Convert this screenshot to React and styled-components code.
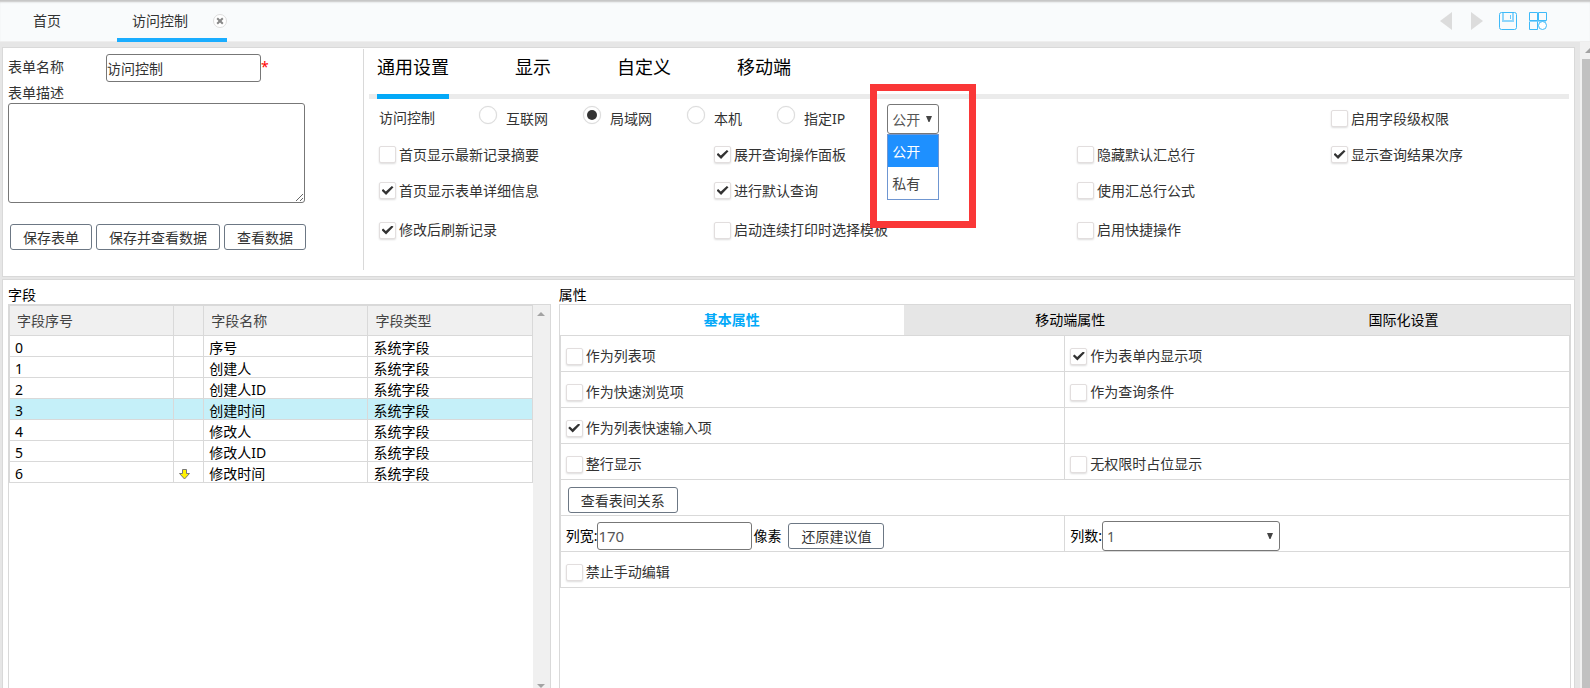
import React, { useState } from 'react';
import styled, { createGlobalStyle } from 'styled-components';

const fields = [
  { id: 0, name: '序号' },
  { id: 1, name: '创建人' },
  { id: 2, name: '创建人ID' },
  { id: 3, name: '创建时间' },
  { id: 4, name: '修改人' },
  { id: 5, name: '修改人ID' },
  { id: 6, name: '修改时间', moved: true }
];

const settingTabs = ['通用设置', '显示', '自定义', '移动端'];
const propertyTabs = ['基本属性', '移动端属性', '国际化设置'];
const accessModes = ['互联网', '局域网', '本机', '指定IP'];
const visibilities = ['公开', '私有'];

const Check = ({ label, on }) => (
  <CheckLabel>
    <input type="checkbox" defaultChecked={on} />
    {label}
  </CheckLabel>
);

const Caret = () => (
  <svg width="6" height="6" viewBox="0 0 6 6" aria-hidden="true">
    <path d="M0 0h6L3.5 6h-1z" fill="#444" />
  </svg>
);

const TopBar = () => (
  <Header>
    <PageTab>
      <button>首页</button>
    </PageTab>
    <PageTab $active>
      <button>访问控制</button>
      <CloseBtn aria-label="关闭">
        <svg width="14" height="14" viewBox="0 0 14 14">
          <circle cx="7" cy="7" r="6.5" fill="#fff" stroke="#ddd" />
          <path d="M4.2 4.2l5.6 5.6M9.8 4.2l-5.6 5.6" stroke="#888" strokeWidth="2" />
        </svg>
      </CloseBtn>
    </PageTab>
    <Tools>
      <IconBtn aria-label="后退">
        <svg width="18" height="18" viewBox="0 0 18 18">
          <path d="M13 0v18L1 9z" fill="#dcdcdc" />
        </svg>
      </IconBtn>
      <IconBtn aria-label="前进">
        <svg width="18" height="18" viewBox="0 0 18 18">
          <path d="M2 0v18l12-9z" fill="#dcdcdc" />
        </svg>
      </IconBtn>
      <IconBtn aria-label="保存">
        <svg width="18" height="18" viewBox="0 0 18 18" fill="none" stroke="#3fbaf9">
          <path d="M4 1v8h10V1" stroke="#8fd6fc" strokeWidth="2" />
          <path d="M11.5 3v4" stroke="#6ac8fa" />
          <rect x="0.5" y="0.5" width="17" height="17" rx="2" />
        </svg>
      </IconBtn>
      <IconBtn aria-label="应用">
        <svg width="18" height="18" viewBox="0 0 18 18" fill="none" stroke="#3fbaf9">
          <path d="M9 1v9M1 9h16" stroke="#8fd6fc" strokeWidth="2" />
          <path d="M0.5 0.5h8v8h-8zM9.5 0.5h8v8h-8zM8.5 9.5v8h-8v-8" />
          <circle cx="13.5" cy="13.5" r="4" fill="#fff" />
        </svg>
      </IconBtn>
    </Tools>
  </Header>
);

const FormInfo = () => (
  <Info>
    <NameRow>
      <label htmlFor="form-name">表单名称</label>
      <TextInput id="form-name" defaultValue="访问控制" />
      <span>*</span>
    </NameRow>
    <DescLabel htmlFor="form-desc">表单描述</DescLabel>
    <Description id="form-desc" />
    <Actions>
      <Btn>保存表单</Btn>
      <Btn>保存并查看数据</Btn>
      <Btn>查看数据</Btn>
    </Actions>
  </Info>
);

const VisibilityPicker = () => {
  const [value, setValue] = useState('公开');

  return (
    <Picker>
      <SelectBox>
        <select aria-label="公开范围" value={value} onChange={e => setValue(e.target.value)}>
          {visibilities.map(v => (
            <option key={v}>{v}</option>
          ))}
        </select>
        <Caret />
      </SelectBox>
      <Menu role="listbox">
        {visibilities.map(v => (
          <MenuItem
            key={v}
            role="option"
            aria-selected={v === value}
            $active={v === value}
            onClick={() => setValue(v)}
          >
            {v}
          </MenuItem>
        ))}
      </Menu>
      <Highlight />
    </Picker>
  );
};

const Settings = () => (
  <SettingsWrap>
    <SettingTabs>
      {settingTabs.map((tab, index) => (
        <SettingTab key={tab} $active={index === 0}>
          {tab}
        </SettingTab>
      ))}
    </SettingTabs>
    <Options>
      <Access>
        <span>访问控制</span>
        {accessModes.map(mode => (
          <RadioLabel key={mode}>
            <input type="radio" name="access" defaultChecked={mode === '局域网'} />
            <span>{mode}</span>
          </RadioLabel>
        ))}
        <VisibilityPicker />
      </Access>
      <Check label="启用字段级权限" />
      <Check label="首页显示最新记录摘要" />
      <Check label="展开查询操作面板" on />
      <Check label="隐藏默认汇总行" />
      <Check label="显示查询结果次序" on />
      <Check label="首页显示表单详细信息" on />
      <Check label="进行默认查询" on />
      <Check label="使用汇总行公式" />
      <i />
      <Check label="修改后刷新记录" on />
      <Check label="启动连续打印时选择模板" />
      <Check label="启用快捷操作" />
    </Options>
  </SettingsWrap>
);

const FieldList = () => {
  const [selected, setSelected] = useState(3);

  return (
    <FieldSection>
      <Title>字段</Title>
      <FieldBox>
        <FieldTable>
          <colgroup>
            <col />
            <col className="mark" />
            <col />
            <col />
          </colgroup>
          <thead>
            <tr>
              <th>字段序号</th>
              <th />
              <th>字段名称</th>
              <th>字段类型</th>
            </tr>
          </thead>
          <tbody>
            {fields.map(field => (
              <FieldRow
                key={field.id}
                $selected={field.id === selected}
                onClick={() => setSelected(field.id)}
              >
                <td>{field.id}</td>
                <td>
                  {field.moved ? (
                    <svg width="11" height="11" viewBox="0 0 11 11">
                      <path
                        d="M3.5 0.5h4v4h3l-5 5.5-5-5.5h3z"
                        fill="#fff200"
                        stroke="#777"
                      />
                    </svg>
                  ) : null}
                </td>
                <td>{field.name}</td>
                <td>系统字段</td>
              </FieldRow>
            ))}
          </tbody>
        </FieldTable>
        <InnerScroll>
          <svg width="8" height="4" viewBox="0 0 8 4">
            <path d="M0 4l4-4 4 4z" fill="#a3a3a3" />
          </svg>
          <svg width="8" height="4" viewBox="0 0 8 4">
            <path d="M0 0l4 4 4-4z" fill="#a3a3a3" />
          </svg>
        </InnerScroll>
      </FieldBox>
    </FieldSection>
  );
};

const Properties = () => (
  <PropertySection>
    <Title>属性</Title>
    <PropertyBox>
      <PropertyTabs>
        {propertyTabs.map((tab, index) => (
          <PropertyTab key={tab} $active={index === 0}>
            {tab}
          </PropertyTab>
        ))}
      </PropertyTabs>
      <PropertyTable>
        <tbody>
          <tr>
            <td><Check label="作为列表项" /></td>
            <td><Check label="作为表单内显示项" on /></td>
          </tr>
          <tr>
            <td><Check label="作为快速浏览项" /></td>
            <td><Check label="作为查询条件" /></td>
          </tr>
          <tr>
            <td><Check label="作为列表快速输入项" on /></td>
            <td />
          </tr>
          <tr>
            <td><Check label="整行显示" /></td>
            <td><Check label="无权限时占位显示" /></td>
          </tr>
          <tr>
            <td colSpan="2">
              <Inline $indent>
                <Btn>查看表间关系</Btn>
              </Inline>
            </td>
          </tr>
          <tr>
            <td>
              <Inline>
                <label htmlFor="col-width">列宽:</label>
                <TextInput id="col-width" defaultValue="170" $number />
                <Unit>像素</Unit>
                <Btn>还原建议值</Btn>
              </Inline>
            </td>
            <td>
              <Inline>
                <label htmlFor="col-count">列数:</label>
                <SelectBox $wide>
                  <select id="col-count">
                    <option>1</option>
                    <option>2</option>
                  </select>
                  <Caret />
                </SelectBox>
              </Inline>
            </td>
          </tr>
          <tr>
            <td colSpan="2"><Check label="禁止手动编辑" /></td>
          </tr>
        </tbody>
      </PropertyTable>
    </PropertyBox>
  </PropertySection>
);

const App = () => (
  <Page>
    <GlobalStyle />
    <TopBar />
    <Body>
      <Main>
        <Panel>
          <FormInfo />
          <Settings />
        </Panel>
        <Panel $grow>
          <FieldList />
          <Properties />
        </Panel>
      </Main>
      <PageScroll>
        <svg width="10" height="5" viewBox="0 0 10 5">
          <path d="M0 5l5-5 5 5z" fill="#a3a3a3" />
        </svg>
        <div />
      </PageScroll>
    </Body>
  </Page>
);

export default App;

const GlobalStyle = createGlobalStyle`
  * {
    box-sizing: border-box;
  }

  body {
    margin: 0;
    background: #e6e6e6;
    color: #333;
    font-family: 'Noto Sans', 'Noto Sans CJK SC', sans-serif;
    font-size: 14px;
    line-height: 20px;
    overflow: hidden;
  }

  button, input, select, textarea {
    margin: 0;
    color: inherit;
    font: inherit;
  }

  button {
    padding: 0;
    border: none;
    background: none;
    cursor: pointer;
  }
`;

const Page = styled.div`
  display: flex;
  flex-direction: column;
  height: 100vh;
`;

const Header = styled.header`
  display: flex;
  flex: none;
  height: 42px;
  padding-left: 19px;
  background: #f9fbfc;
  border-bottom: 1px solid #eee;
  box-shadow: inset 0 3px 2px -1px #c4c4c4;
`;

const PageTab = styled.div`
  display: flex;
  justify-content: space-between;
  align-items: center;
  height: 42px;
  padding: ${props => (props.$active ? '3px 0 0 15px' : '3px 56px 0 14px')};
  border-bottom: 4px solid ${props => (props.$active ? '#1aadff' : 'transparent')};
  width: ${props => (props.$active ? '110px' : 'auto')};
`;

const CloseBtn = styled.button`
  display: flex;
`;

const Tools = styled.div`
  display: flex;
  align-items: center;
  gap: 12px;
  margin-left: auto;
  padding-right: 43px;
`;

const IconBtn = styled.button`
  display: flex;
`;

const Body = styled.div`
  display: flex;
  flex: 1;
  min-height: 0;
`;

const Main = styled.main`
  display: flex;
  flex-direction: column;
  flex: 1;
  gap: 2px;
  min-width: 0;
  padding: 5px 5px 0 2px;
`;

const Panel = styled.section`
  display: flex;
  flex: ${props => (props.$grow ? '1' : 'none')};
  min-height: 0;
  background: #fff;
  border: 1px solid #d9d9d9;
  border-bottom-width: ${props => (props.$grow ? '0' : '1px')};
`;

const PageScroll = styled.div`
  display: flex;
  flex-direction: column;
  align-items: flex-end;
  flex: none;
  width: 10px;
  overflow: hidden;
  background: #f1f1f1;

  svg {
    flex: none;
    margin: 6px -5px 6px 0;
  }

  div {
    flex: 1;
    width: 8px;
    background: #c1c1c1;
  }
`;

const Info = styled.form`
  flex: none;
  width: 361px;
  margin: 1px 0 6px;
  padding: 5px 5px 20px;
  border-right: 1px solid #d9d9d9;
`;

const NameRow = styled.div`
  display: flex;
  align-items: center;

  label {
    width: 98px;
    padding-bottom: 2px;
  }

  span {
    padding-bottom: 2px;
    color: #f00;
  }
`;

const TextInput = styled.input`
  width: 155px;
  height: 28px;
  padding: 0;
  border: 1px solid #777;
  border-radius: 3px;
  color: ${props => (props.$number ? '#555' : '#333')};
  font-size: ${props => (props.$number ? '15px' : '14px')};
`;

const DescLabel = styled.label`
  display: block;
  padding-top: 1px;
`;

const Description = styled.textarea`
  display: block;
  width: 297px;
  height: 100px;
  border: 1px solid #777;
  border-radius: 3px;
`;

const Actions = styled.div`
  display: flex;
  gap: 4px;
  padding: 21px 2px 0;
`;

const Btn = styled.button.attrs({ type: 'button' })`
  height: 26px;
  padding: 2px 12px 0;
  background: #fff;
  border: 1px solid #6c7784;
  border-radius: 3px;
  color: #333;
  line-height: 20px;
`;

const SettingsWrap = styled.div`
  flex: 1;
  min-width: 0;
  padding: 0 5px;
`;

const SettingTabs = styled.div`
  display: flex;
  gap: 66px;
  height: 51px;
  padding-left: 8px;
  border-bottom: 5px solid #ebebeb;
`;

const SettingTab = styled.button`
  height: 51px;
  padding-bottom: 9px;
  border-bottom: 5px solid ${props => (props.$active ? '#03a9f8' : 'transparent')};
  color: #000;
  font-size: 18px;
`;

const Options = styled.div`
  display: grid;
  grid-template-columns: 335fr 363fr 254fr 238fr;
  grid-template-rows: 39px 33px 39px 40px;
  align-items: center;
  padding-left: 10px;
`;

const CheckLabel = styled.label`
  display: flex;
  align-items: center;
  gap: 3px;
  white-space: nowrap;

  input {
    display: grid;
    place-content: center;
    width: 17px;
    height: 17px;
    appearance: none;
    background: #fff;
    border: 1px solid #e2dede;
    border-radius: 2px;
    box-shadow: 0 1px 2px #ddd;
  }

  input:checked::before {
    content: '';
    width: 12px;
    height: 9px;
    background: #333;
    clip-path: polygon(0 50%, 14% 34%, 36% 60%, 86% 0, 100% 14%, 38% 100%);
  }
`;

const Access = styled.div`
  display: flex;
  align-items: center;
  grid-column: span 3;

  > span {
    width: 100px;
    padding-bottom: 2px;
  }
`;

const RadioLabel = styled.label`
  display: flex;
  align-items: center;
  gap: 9px;
  margin-right: 35px;

  input {
    display: grid;
    place-content: center;
    width: 18px;
    height: 18px;
    margin-bottom: 7px;
    appearance: none;
    background: #fff;
    border: 1px solid #dcdcdc;
    border-radius: 50%;
    box-shadow: 0 0 1px #ddd;
  }

  input:checked::before {
    content: '';
    width: 10px;
    height: 10px;
    background: #333;
    border-radius: 50%;
  }
`;

const Picker = styled.div`
  position: relative;
  margin-left: 7px;
`;

const SelectBox = styled.div`
  position: relative;
  width: ${props => (props.$wide ? '178px' : '52px')};
  height: 30px;

  select {
    display: block;
    width: 100%;
    height: 30px;
    padding: 2px 4px 0;
    appearance: none;
    background: #fff;
    border: 1px solid #777;
    border-radius: 3px;
    color: #555;
  }

  svg {
    position: absolute;
    top: 12px;
    right: 7px;
    pointer-events: none;
  }
`;

const Menu = styled.ul`
  position: absolute;
  top: 30px;
  left: 0;
  z-index: 1;
  width: 52px;
  margin: 0;
  padding: 0;
  list-style: none;
  background: #fff;
  border: 1px solid #6f96d1;
`;

const MenuItem = styled.li`
  height: 32px;
  padding-left: 4px;
  background: ${props => (props.$active ? '#1e90ff' : '#fff')};
  color: ${props => (props.$active ? '#fff' : '#444')};
  line-height: 34px;
`;

const Highlight = styled.div`
  position: absolute;
  top: -20px;
  left: -17px;
  width: 106px;
  height: 144px;
  border: 7px solid #fa3737;
  pointer-events: none;
`;

const Title = styled.h2`
  margin: 0;
  padding: 6px 0 0;
  color: #000;
  font-size: 14px;
  font-weight: 400;
  line-height: 18px;
`;

const FieldSection = styled.section`
  display: flex;
  flex-direction: column;
  flex: 349;
  min-width: 0;
  padding-left: 5px;
`;

const FieldBox = styled.div`
  display: flex;
  flex: 1;
  border: 1px solid #d9d9d9;
  border-bottom: none;
`;

const FieldTable = styled.table`
  flex: 1;
  align-self: flex-start;
  table-layout: fixed;
  border-collapse: collapse;
  color: #000;

  .mark {
    width: 30px;
  }

  th,
  td {
    border: 1px solid #d9d9d9;
    text-align: left;
    white-space: nowrap;
  }

  th {
    height: 30px;
    padding: 0 7px;
    background: #f0f0f0;
    color: #444;
    font-weight: 400;
  }

  td {
    height: 21px;
    padding: 4px 5px 0;
    line-height: 16px;
  }

  svg {
    display: block;
  }
`;

const FieldRow = styled.tr`
  background: ${props => (props.$selected ? '#c5f0f9' : '#fff')};
`;

const InnerScroll = styled.div`
  display: flex;
  flex-direction: column;
  justify-content: space-between;
  align-items: center;
  flex: none;
  width: 17px;
  padding: 7px 0 0;
  background: #f0f0f0;
`;

const PropertySection = styled.section`
  display: flex;
  flex-direction: column;
  flex: 651;
  min-width: 0;
  padding: 0 3px 0 8px;
`;

const PropertyBox = styled.div`
  flex: 1;
  border: 1px solid #d9d9d9;
  border-bottom: none;
`;

const PropertyTabs = styled.div`
  display: flex;
  height: 30px;
`;

const PropertyTab = styled.button`
  flex: ${props => (props.$active ? '344' : '333')};
  background: ${props => (props.$active ? '#fff' : '#e6e6e6')};
  color: ${props => (props.$active ? '#03a9f8' : '#000')};
  font-weight: ${props => (props.$active ? '700' : '400')};
`;

const PropertyTable = styled.table`
  width: 100%;
  table-layout: fixed;
  border-collapse: collapse;

  td {
    height: 36px;
    padding: 5px 5px 0;
    border: 1px solid #d9d9d9;
  }
`;

const Inline = styled.div`
  display: flex;
  align-items: center;
  height: 30px;
  padding-left: ${props => (props.$indent ? '2px' : '0')};
  color: #000;
`;

const Unit = styled.span`
  margin: 0 7px 0 1px;
`;
